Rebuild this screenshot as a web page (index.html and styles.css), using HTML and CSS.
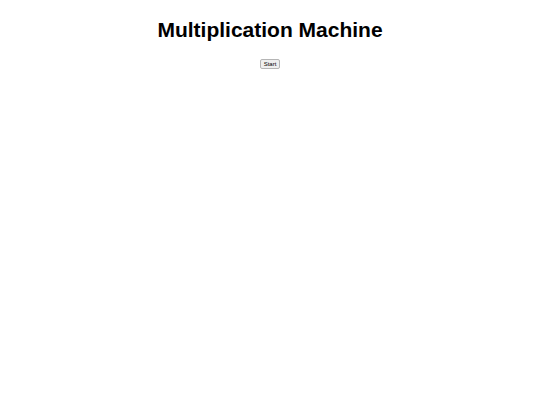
FILE: index.html
```html
<!DOCTYPE html>
<html>
<head>
<meta charset="utf-8">
<link rel="stylesheet" href="styles.css">
</head>
<body>
<div class="app">
<h1 class="title">Multiplication Machine</h1>
<button class="start">Start</button>
</div>
</body>
</html>
```
FILE: styles.css
```css
body {
  margin: 8px;
  font-family: "Liberation Sans", Arial, sans-serif;
  background: #fff;
}
.app {
  display: flex;
  flex-direction: column;
  align-items: center;
}
.title {
  font-size: 21px;
  font-weight: bold;
  margin: 8px 0 0;
  line-height: 28px;
  color: #000;
}
.start {
  margin-top: 15px;
  font-family: "Liberation Sans", Arial, sans-serif;
  font-size: 6px;
  padding: 1px 3px;
  border: 1px solid #b5b5b5;
  border-radius: 2px;
  background: #efefef;
  color: #000;
}
```
